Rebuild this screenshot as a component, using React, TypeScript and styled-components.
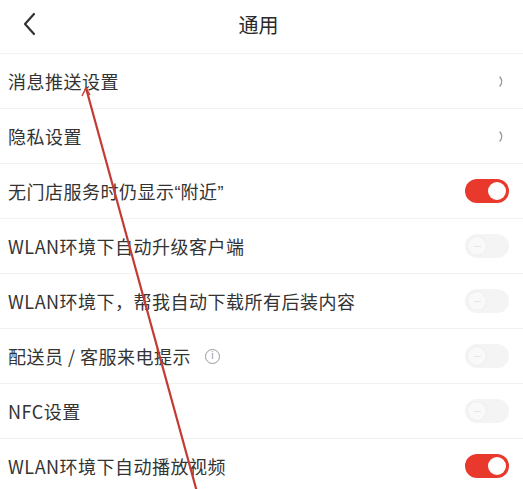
import React from "react";
import styled, { createGlobalStyle } from "styled-components";

const GlobalStyle = createGlobalStyle`
  html, body {
    margin: 0;
    padding: 0;
    background: #ffffff;
  }

  body {
    font-family: "Noto Sans CJK SC", "Noto Sans", sans-serif;
    color: #333333;
  }
`;

const Page = styled.div`
  position: relative;
  width: 523px;
  height: 489px;
  overflow: hidden;
  background: #ffffff;
`;

const Header = styled.header`
  height: 53px;
  display: flex;
  align-items: center;
  justify-content: center;
  position: relative;
  border-bottom: 1px solid #f3f3f3;
`;

const BackButton = styled.button`
  position: absolute;
  left: 18px;
  top: 10px;
  width: 22px;
  height: 28px;
  padding: 0;
  border: none;
  background: none;
  display: flex;
  align-items: center;
  justify-content: center;
`;

const Title = styled.h1`
  margin: 0;
  font-size: 20px;
  font-weight: 400;
  color: #2a2a2a;
  transform: translate(-3px, -2px);
`;

const List = styled.ul`
  list-style: none;
  margin: 0;
  padding: 0;
`;

const Row = styled.li`
  height: 55px;
  box-sizing: border-box;
  padding: 0 14px 0 8px;
  display: flex;
  align-items: center;
  justify-content: space-between;
  border-bottom: 1px solid #f2f2f2;
`;

const Label = styled.span`
  display: flex;
  align-items: center;
  gap: 14px;
  font-size: 18px;
  color: #333333;
  letter-spacing: 0.5px;
`;

const Quote = styled.span`
  font-family: "Liberation Sans", sans-serif;
  letter-spacing: 0;
`;

const Info = styled.span`
  width: 13px;
  height: 13px;
  border: 1px solid #9a9a9a;
  border-radius: 50%;
  display: inline-flex;
  align-items: center;
  justify-content: center;
  font-size: 10px;
  line-height: 1;
  color: #9a9a9a;
  font-family: "DejaVu Sans", sans-serif;
`;

const Chevron = styled.span`
  display: flex;
  align-items: center;
  margin-right: 4px;
`;

const Switch = styled.span<{ $on: boolean }>`
  width: 44px;
  height: 24px;
  border-radius: 12px;
  box-sizing: border-box;
  padding: 3px;
  display: flex;
  align-items: center;
  justify-content: ${(p) => (p.$on ? "flex-end" : "flex-start")};
  background: ${(p) => (p.$on ? "#e8392c" : "#f4f4f4")};
`;

const Knob = styled.span<{ $on: boolean }>`
  width: 18px;
  height: 18px;
  border-radius: 50%;
  background: ${(p) => (p.$on ? "#ffffff" : "#f9f9f9")};
  box-shadow: ${(p) => (p.$on ? "none" : "0 0 0 1px #eeeeee")};
  display: flex;
  align-items: center;
  justify-content: center;

  &::after {
    content: "";
    display: ${(p) => (p.$on ? "none" : "block")};
    width: 7px;
    height: 1px;
    background: #e8e8e8;
  }
`;

const Overlay = styled.svg`
  position: absolute;
  inset: 0;
  pointer-events: none;
`;

type Item = {
  key: string;
  label: React.ReactNode;
  kind: "link" | "switch";
  on?: boolean;
  info?: boolean;
};

const items: Item[] = [
  { key: "push", label: "消息推送设置", kind: "link" },
  { key: "privacy", label: "隐私设置", kind: "link" },
  {
    key: "nearby",
    label: (
      <span>
        无门店服务时仍显示<Quote>“</Quote>附近<Quote>”</Quote>
      </span>
    ),
    kind: "switch",
    on: true,
  },
  { key: "upgrade", label: "WLAN环境下自动升级客户端", kind: "switch", on: false },
  { key: "download", label: "WLAN环境下，帮我自动下载所有后装内容", kind: "switch", on: false },
  { key: "call", label: "配送员 / 客服来电提示", kind: "switch", on: false, info: true },
  { key: "nfc", label: "NFC设置", kind: "switch", on: false },
  { key: "video", label: "WLAN环境下自动播放视频", kind: "switch", on: true },
];

const App = () => {
  return (
    <Page>
      <GlobalStyle />
      <Header>
        <BackButton aria-label="返回">
          <svg width="14" height="24" viewBox="0 0 14 24">
            <path d="M12 2 L3 12 L12 22" fill="none" stroke="#333" strokeWidth="2.2" strokeLinecap="round" strokeLinejoin="round" />
          </svg>
        </BackButton>
        <Title>通用</Title>
      </Header>

      <List>
        {items.map((item) => (
          <Row key={item.key}>
            <Label>
              {item.label}
              {item.info && <Info>i</Info>}
            </Label>
            {item.kind === "link" ? (
              <Chevron>
                <svg width="6" height="11" viewBox="0 0 6 11">
                  <path d="M1 1 Q4.5 5.5 1 10" fill="none" stroke="#9a9a9a" strokeWidth="1.4" strokeLinecap="round" />
                </svg>
              </Chevron>
            ) : (
              <Switch $on={!!item.on}>
                <Knob $on={!!item.on} />
              </Switch>
            )}
          </Row>
        ))}
      </List>

      {/* annotation line drawn over the screenshot */}
      <Overlay width="523" height="489" viewBox="0 0 523 489">
        <line x1="86" y1="88" x2="197" y2="492" stroke="#c23a33" strokeWidth="2.2" />
        <path d="M82 96 L86 88 L90 95" fill="none" stroke="#c23a33" strokeWidth="1.4" />
      </Overlay>
    </Page>
  );
};

export default App;
